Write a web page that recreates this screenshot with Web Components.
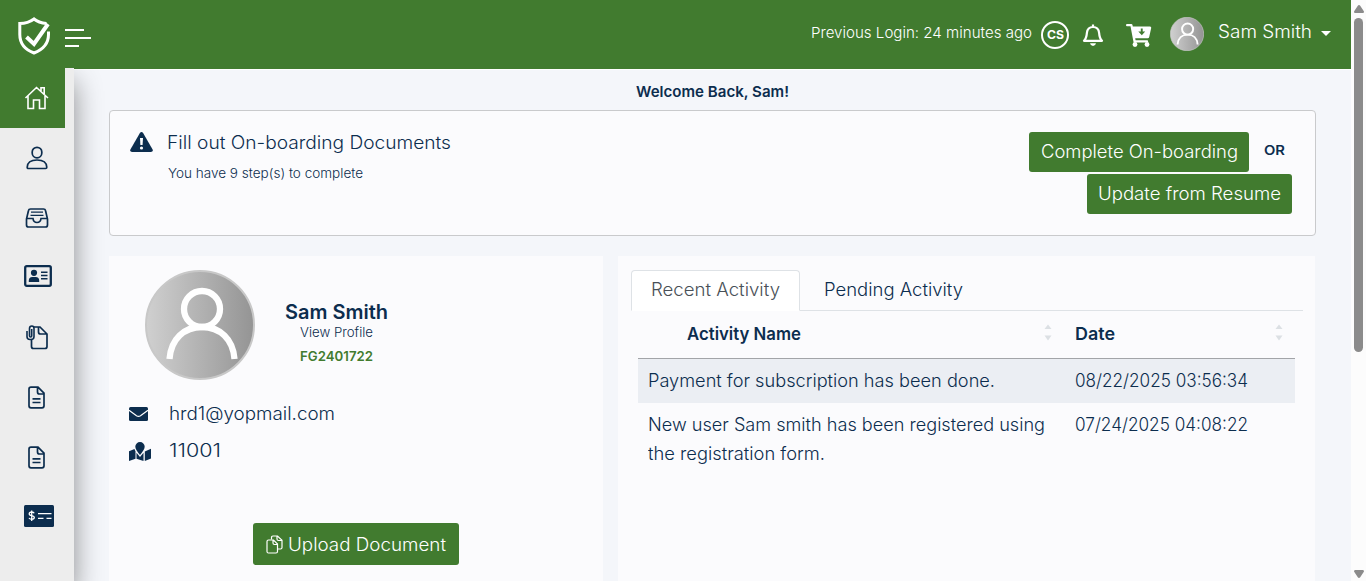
<!DOCTYPE html>
<html lang="en">
<head>
<meta charset="utf-8">
<title>Dashboard</title>
<style>
html,body{margin:0;height:100%;overflow:hidden}
body{font-family:Inter,"Open Sans",sans-serif;color:#0c2d4e;--green:#417b2f;--navy:#0c2d4e;background:#f4f6fa}
</style>
</head>
<body>
<dash-app></dash-app>
<script>
const define=(name,html,setup)=>customElements.define(name,class extends HTMLElement{
  connectedCallback(){
    if(this.shadowRoot)return;
    const t=document.createElement('template');t.innerHTML=html;
    this.attachShadow({mode:'open'}).append(t.content.cloneNode(true));
    if(setup)setup(this);
  }
});

/* One line of text, widened or narrowed to fill the width w. */
define('ui-text','<style>:host{display:block;white-space:pre;line-height:20px;flex:none}span{display:inline-block;transform-origin:0 50%}</style><span><slot></slot></span>',el=>{
  const s=el.shadowRoot.querySelector('span'),w=+el.getAttribute('w');
  el.style.fontSize=(el.getAttribute('size')||18)+'px';
  el.style.fontWeight=el.getAttribute('weight')||360;
  el.style.width=w+'px';
  s.style.transform=`scaleX(${w/s.getBoundingClientRect().width})`;
});

/* Line and solid icons. */
const doc='<path d="M3 1.2h7l6 6v12.600q0 2-2 2H3q-2 0-2-2V3.200q0-2 2-2zM9.500 1.500v4.500q0 2 2 2H16M4.500 12.800h8M4.500 16.500h8"/>';
const icons={
 shield:[32,38,'<g fill="none" stroke="#fff" stroke-width="3"><path d="M28.500 6.500C23 6 19 4.500 16 2 12 5 7 6.500 1.800 6.500v11C1.800 27 8 33 16 36c9-3.500 14.500-9.500 14.500-18.500v-3"/><path d="M8.500 20l7.500 7L30 7" stroke-width="4"/></g>'],
 menu:[27,19,'<path d="M0 1h19M0 9h26M0 17h14" fill="none" stroke="#fff" stroke-width="2"/>'],
 home:[26,24,'<path d="M1.500 12L12.500 1.500 24 12M4 10v12.500h5.500V14h6v8.500H21V10M17 5V1.800h3.200V8" fill="none" stroke="#fff" stroke-width="1.600"/>'],
 user:[22,24,'<g fill="none" stroke="#0c2d4e" stroke-width="1.700"><rect x="6.200" y="1.300" width="9.600" height="10.500" rx="4.800"/><path d="M1.200 21.200c.2-4.500 4-7.200 9.800-7.200s9.600 2.700 9.800 7.200q0 1.300-1.200 1.300H2.400q-1.200 0-1.200-1.300z"/></g>'],
 inbox:[24,20,'<g fill="none" stroke="#0c2d4e" stroke-width="1.700"><path d="M1.500 11L3.500 2.500Q3.800 1 5.500 1h13q1.700 0 2 1.500l2 8.500v6q0 2-2 2h-17q-2 0-2-2zM1.500 10.500H8q.5 4 4 4t4-4h6.500"/><path d="M6 4.200h12M5.500 7.400h13" stroke-width="1.300"/></g>'],
 idcard:[28,22,'<rect x="1.200" y="1.200" width="25.600" height="19.600" rx="1.500" fill="none" stroke="#0c2d4e" stroke-width="2.300"/><g fill="#0c2d4e"><circle cx="10" cy="7.800" r="3.100"/><path d="M4.800 17v-1.500q0-3.500 3.500-3.500h3.400q3.500 0 3.500 3.500V17zM17 6.500h6.500V8H17zM17 9.700h6.500v1.500H17zM17 13h6.500v1.500H17z"/></g>'],
 clip:[22,25,'<g fill="none" stroke="#0c2d4e" stroke-width="1.700"><path d="M8 2h6l7 7v12.500q0 2-2 2H7.500q-2 0-2-2V15M12.500 2v5q0 2 2 2H21"/><path d="M1 6v5.500q0 3 3 3h1q3 0 3-3V3.500q0-2.500-2.200-2.500T3.500 3.500V11q0 1 1.100 1t1.100-1V4" stroke-width="1.600"/></g>'],
 doc:[18,23,'<g fill="none" stroke="#0c2d4e" stroke-width="1.700">'+doc+'</g>'],
 check:[30,22,'<rect width="30" height="22" rx="1.500" fill="#0c2d4e"/><g fill="none" stroke="#fff" stroke-width="1.200"><path d="M14 8.700h13.500M14 13.300h5.500M22.500 13.300h5"/><path d="M10.200 8.200q-.5-1.200-2.600-1.200-2.400 0-2.400 1.700 0 1.500 2.500 1.900 2.600.5 2.600 2 0 1.700-2.500 1.700-2.300 0-2.800-1.400M7.700 5.500v10.500" stroke-width="1.300"/></g>'],
 bell:[22,24,'<path d="M2 17.800h18c-2.300-2.200-2.600-4.300-2.900-8C16.700 6 14.300 4 11 4S5.300 6 4.900 9.800C4.600 13.500 4.300 15.600 2 17.800zM11 4V1.500" fill="none" stroke="#fff" stroke-width="2.200" stroke-linejoin="round"/><path d="M8 20.300h6q-.5 2.700-3 2.700t-3-2.700z" fill="#fff"/>'],
 cart:[26,23,'<g fill="#fff"><path d="M1 0h4.300q1 0 1.200 1L6.800 2.500H24q1.500 0 1.200 1.500l-2 9q-.3 1.300-1.500 1.300H9.200l.4 1.900H21q1.200 0 1.200 1.100T21 18.500H8.600q-1 0-1.200-1L4.500 2.300H1q-1 0-1-1.100T1 0z"/><circle cx="9" cy="20.500" r="2.400"/><circle cx="21" cy="20.500" r="2.400"/></g><path d="M14.800 4.500h1.900v3h2.500l-3.400 3.700-3.500-3.700h2.500z" fill="#417b2f"/>'],
 warn:[23,20,'<path d="M11.500 0q1 0 1.600 1l9.500 16.500q.8 2.500-1.700 2.500H2.100Q-.4 20 .4 17.500L9.900 1q.6-1 1.600-1z" fill="#0c2d4e"/><path d="M10 6h3l-.4 7h-2.200z" fill="#fff"/><circle cx="11.500" cy="16" r="1.600" fill="#fff"/>'],
 mail:[19,14,'<rect width="19" height="14" rx="1.500" fill="#0c2d4e"/><path d="M0 3.300l7.500 5.500q2 1.300 4 0L19 3.300" fill="none" stroke="#fff" stroke-width="1.200"/>'],
 map:[22,19,'<g fill="#0c2d4e"><path d="M11 0a4.700 4.700 0 0 1 4.700 4.700c0 2.600-2.600 5.500-4.700 8.300-2.100-2.800-4.700-5.700-4.700-8.300A4.700 4.700 0 0 1 11 0zM0 9.200L5.500 7q.4 1.300 1 2.200V16.700L0 19zM7.500 10.800L11 15l3.500-4.200V19l-7-2.300zM15.800 9.500L22 6.800v9.700L15.800 19z"/></g>'],
 copy:[17,19,'<g fill="none" stroke="#fff" stroke-width="1.200"><path d="M2.500 5h5l4 4v7.500q0 1.500-1.500 1.500H2.500Q1 18 1 16.500v-10Q1 5 2.500 5zM7 5v3q0 1.500 1.500 1.500h3"/><path d="M5.500 4.500V2.700Q5.500 1 7 1h4.500L16 5.200v7.300q0 1.500-1.500 1.500h-2.500M11 1v3q0 1.500 1.500 1.500H16"/></g>'],
 sort:[8,17,'<path d="M4 0.500l3.500 4.500h-7zM.5 11.500h7L4 16.500z" fill="#dce0e4"/>'],
 caret:[10,5,'<path d="M0 0h10L5 5z" fill="#fff"/>'],
 up:[10,8,'<path d="M5 0q.8 0 1.200.7L10 6.500Q10 8 9 8H1Q0 8 0 6.500L3.800.7Q4.200 0 5 0z" fill="#8b8b8b"/>'],
 avatar:[110,110,'<defs><linearGradient id="g"><stop offset="0" stop-color="#d0d0d0"/><stop offset="1" stop-color="#949494"/></linearGradient></defs><circle cx="55" cy="55" r="54" fill="url(#g)" stroke="#c8c8c8" stroke-width="2"/><g fill="none" stroke="#fff" stroke-width="6.300"><circle cx="57" cy="39" r="18"/><path d="M24.500 89C26 69 39 57 57 57s31 12 32.500 32"/></g>']
};
define('ui-icon','<style>:host{display:block;flex:none}svg{display:block;width:100%;height:100%}</style>',el=>{
  const [w,h,b]=icons[el.getAttribute('name')];
  const s=+el.getAttribute('scale')||1;
  el.style.width=w*s+'px';el.style.height=h*s+'px';
  el.shadowRoot.innerHTML+=`<svg viewBox="0 0 ${w} ${h}">${b}</svg>`;
});

define('ui-button',`<style>:host{display:flex;align-items:center;justify-content:center;box-sizing:border-box;height:40px;background:var(--green);color:#fff;border-radius:3px;flex:none}</style><slot></slot>`);

define('top-bar',`<style>
:host{display:flex;box-sizing:border-box;height:69px;background:var(--green);color:#fff;padding:0 20px 0 18px;align-items:flex-start;box-shadow:0 1px 0 #fff}
.logo{margin-top:17px}.menu{margin:29px 0 0 15px}
.login{margin:23px 9px 0 auto}
.cs{box-sizing:border-box;width:28px;height:28px;margin-top:21px;border:2px solid #fff;border-radius:50%;display:grid;place-items:center}
.bell{margin:23px 0 0 13px}.cart{margin:24px 0 0 22px}.av{margin:17px 0 0 18px}
.name{margin:22px 0 0 14px}.caret{margin:31px 0 0 9px}
</style>
<ui-icon class="logo" name="shield"></ui-icon><ui-icon class="menu" name="menu"></ui-icon>
<ui-text class="login" size="15" w="221">Previous Login: 24 minutes ago</ui-text>
<div class="cs"><ui-text size="12" w="17" weight="700">CS</ui-text></div>
<ui-icon class="bell" name="bell"></ui-icon><ui-icon class="cart" name="cart"></ui-icon>
<ui-icon class="av" name="avatar" scale=".309"></ui-icon>
<ui-text class="name" w="94">Sam Smith</ui-text><ui-icon class="caret" name="caret"></ui-icon>`);

define('nav-item',`<style>:host{display:flex;align-items:center;justify-content:center;width:65px;height:60px;padding-left:var(--dx,9px);box-sizing:border-box}:host([active]){background:var(--green)}:host([wide]){--dx:13px}:host([raised]){padding-bottom:4px;--dx:10px}:host([wide][raised]){--dx:13px}:host([up]){padding-bottom:1px}</style><slot></slot>`);
define('side-nav',`<style>:host{display:block;position:relative;width:74px;height:513px;margin-top:-1px;background:#ededed;box-shadow:0 14px 28px rgba(0,0,0,.44);clip-path:inset(0 -45px 0 0)}</style>
<nav>
<nav-item active><ui-icon name="home"></ui-icon></nav-item>
<nav-item><ui-icon name="user"></ui-icon></nav-item>
<nav-item><ui-icon name="inbox"></ui-icon></nav-item>
<nav-item raised><ui-icon name="idcard"></ui-icon></nav-item>
<nav-item up><ui-icon name="clip"></ui-icon></nav-item>
<nav-item up><ui-icon name="doc"></ui-icon></nav-item>
<nav-item up><ui-icon name="doc"></ui-icon></nav-item>
<nav-item wide raised><ui-icon name="check"></ui-icon></nav-item>
</nav>`);

define('notice-card',`<style>
:host{display:flex;box-sizing:border-box;height:126px;border:1px solid #c9cacc;border-radius:4px;background:#fbfbfd;padding:21px 23px 0 20px}
.warn{margin:0 14px 0 0}.txt{padding-top:1px}.sub{margin-top:10px;padding-left:1px}
.act{margin-left:auto;display:flex;flex-direction:column;align-items:flex-end;gap:2px}
.row{display:flex}.or{margin:8px 7px 0 15px}
</style>
<ui-icon class="warn" name="warn"></ui-icon>
<div class="txt"><ui-text w="284">Fill out On-boarding Documents</ui-text><ui-text class="sub" size="13" w="195">You have 9 step(s) to complete</ui-text></div>
<div class="act"><div class="row"><ui-button style="width:220px"><ui-text w="197">Complete On-boarding</ui-text></ui-button><ui-text class="or" size="13" w="21" weight="600">OR</ui-text></div>
<ui-button style="width:205px"><ui-text w="183">Update from Resume</ui-text></ui-button></div>`);

define('profile-card',`<style>
:host{display:block;box-sizing:border-box;width:494px;background:#fbfbfd;padding:14px 20px 0}
.top{display:flex;padding-left:16px}.who{display:flex;flex-direction:column;align-items:center;margin:32px 0 0 30px}
.id{color:var(--green);margin-top:4px}
.line{display:flex;align-items:center;height:37px}.line>div{width:40px;padding-top:1px}
.lines{padding-top:15px}
.up{width:206px;height:42px;margin:54px 0 0 124px;gap:5px;padding-top:1px}
</style>
<div class="top"><ui-icon name="avatar"></ui-icon><div class="who"><ui-text size="19.500" w="103" weight="600">Sam Smith</ui-text><ui-text size="13" w="73">View Profile</ui-text><ui-text class="id" size="13" w="73" weight="600">FG2401722</ui-text></div></div>
<div class="lines"><div class="line"><div><ui-icon name="mail"></ui-icon></div><ui-text w="166">hrd1@yopmail.com</ui-text></div>
<div class="line"><div><ui-icon name="map"></ui-icon></div><ui-text w="52">11001</ui-text></div></div>
<ui-button class="up"><ui-icon name="copy"></ui-icon><ui-text w="158">Upload Document</ui-text></ui-button>`);

define('activity-card',`<style>
:host{display:block;box-sizing:border-box;width:697px;background:#fbfbfd;padding:14px 12px 0 13px}
.tabs{display:flex;height:40px;border-bottom:1px solid #dee2e6;width:672px}
.tab{box-sizing:border-box;height:41px;padding:9px 19px 0;border:1px solid transparent;border-radius:4px 4px 0 0}
.on{background:#fff;border-color:#dee2e6 #dee2e6 #fff;color:#495057;width:169px}
.tab:last-child{padding-left:23px}
.table{margin:0 7px;width:657px}
.r{display:grid;grid-template-columns:427px 230px;min-height:44px;line-height:29px}
.h{min-height:47px;border-bottom:1px solid #a2a4a8;align-items:start}
.h>div{display:flex;justify-content:space-between;padding:13px 12px 0 10px}
.h>div:first-child{padding:13px 13px 0 49px}
.odd{background:#ebeef3}
.c{padding:7px 10px 0;display:grid;align-content:start;grid-auto-rows:29px;align-items:center}
</style>
<div class="tabs"><div class="tab on"><ui-text w="129">Recent Activity</ui-text></div><div class="tab"><ui-text w="139">Pending Activity</ui-text></div></div>
<div class="table"><div class="r h"><div><ui-text size="17.500" w="114" weight="600">Activity Name</ui-text><ui-icon name="sort"></ui-icon></div><div><ui-text size="17.500" w="40" weight="600">Date</ui-text><ui-icon name="sort"></ui-icon></div></div>
<div class="r odd"><div class="c"><ui-text w="347">Payment for subscription has been done.</ui-text></div><div class="c"><ui-text w="173">08/22/2025 03:56:34</ui-text></div></div>
<div class="r"><div class="c"><ui-text w="397">New user Sam smith has been registered using</ui-text><ui-text w="177">the registration form.</ui-text></div><div class="c"><ui-text w="173">07/24/2025 04:08:22</ui-text></div></div></div>`);

define('scroll-rail',`<style>:host{display:flex;flex-direction:column;align-items:center;width:15px;height:581px;background:#fcfcfc;box-sizing:border-box;padding:5px 0 3px}.thumb{width:9px;height:334px;border-radius:5px;background:#8b8b8b;margin-top:5px}.down{margin-top:auto;transform:rotate(180deg)}</style><ui-icon name="up"></ui-icon><div class="thumb"></div><ui-icon class="down" name="up"></ui-icon>`);

define('dash-app',`<style>
:host{display:grid;grid-template-columns:1351px 15px;height:581px;overflow:hidden}
.body{display:flex;height:512px}
main{width:1207px;padding:13px 0 0 35px;display:flex;flex-direction:column}
.hi{align-self:center;margin-bottom:8px}
.cards{display:flex;gap:15px;margin-top:20px;height:325px;flex:none}
</style>
<div><top-bar></top-bar><div class="body"><side-nav></side-nav><main><ui-text class="hi" size="15" w="153" weight="600">Welcome Back, Sam!</ui-text><notice-card></notice-card><div class="cards"><profile-card></profile-card><activity-card></activity-card></div></main></div></div>
<scroll-rail></scroll-rail>`);
</script>
</body>
</html>
